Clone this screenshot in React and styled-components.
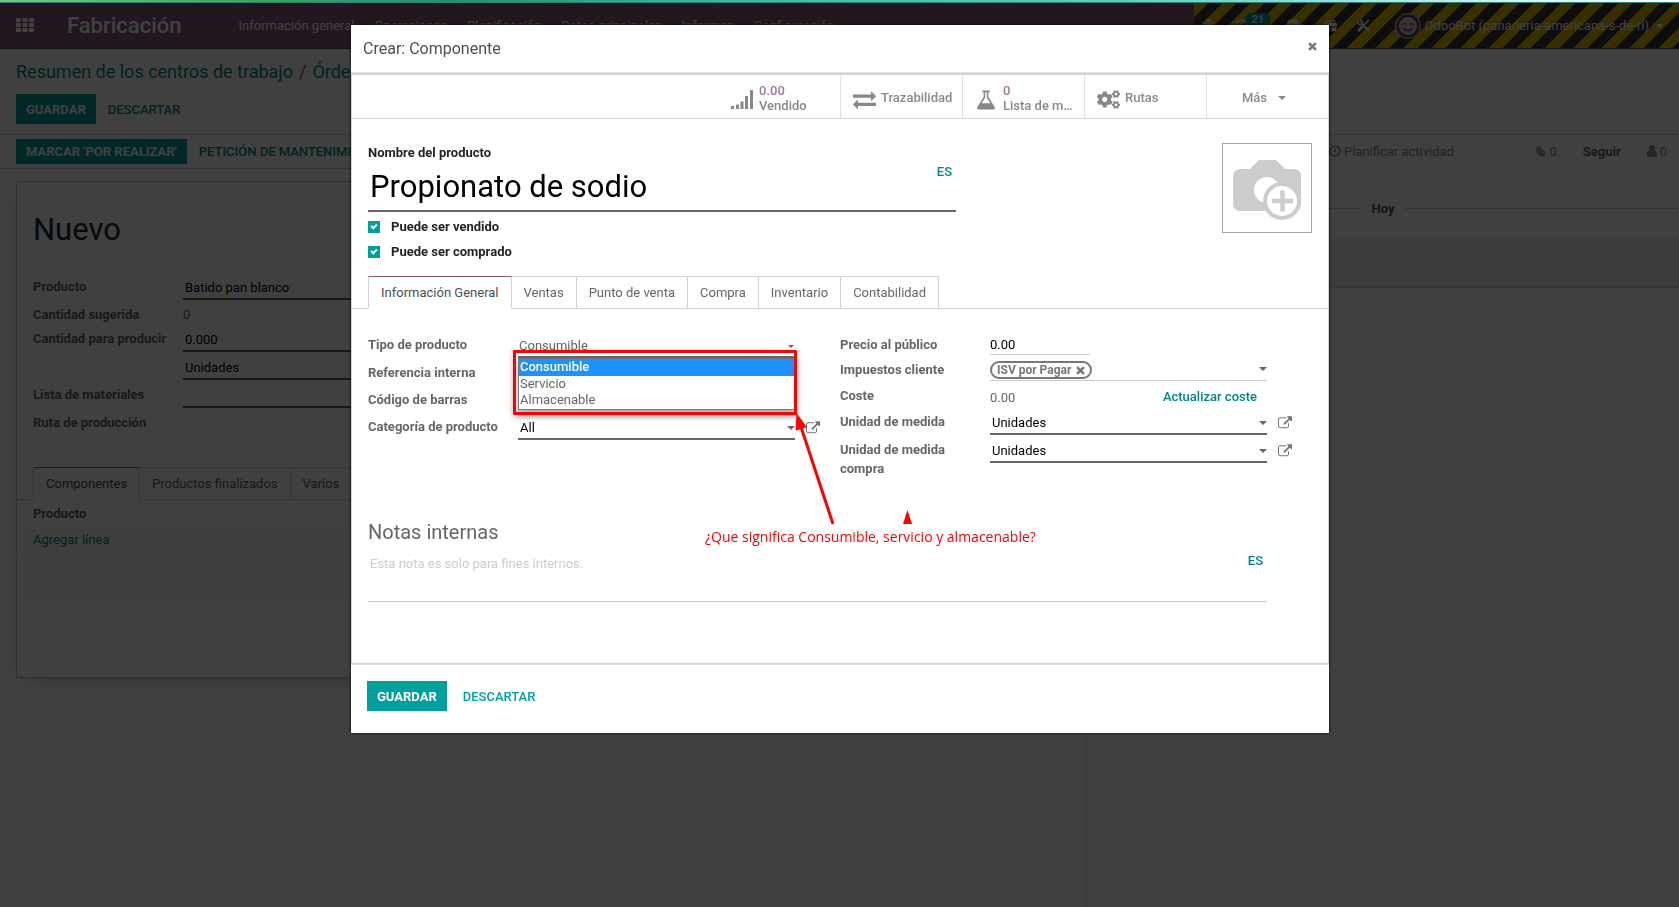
import React from "react";
import styled, { createGlobalStyle, css } from "styled-components";
import { FaCogs, FaBug, FaComments, FaGift } from "react-icons/fa";
import { Paperclip } from "lucide-react";

const Global = createGlobalStyle`
  *, *::before, *::after { box-sizing: border-box; }
  body {
    margin: 0;
    background: #fff;
    color: #666;
    font: 400 13px/19px Roboto, "Liberation Sans", sans-serif;
  }
  button, input, select, textarea { font: inherit; color: inherit; }
  button { cursor: pointer; }
  a { text-decoration: none; }
`;

/* ---------- shared parts ---------- */

const Button = styled.button`
  height: ${(p) => (p.$small ? "25px" : "30px")};
  padding: 0 10px;
  border: 0;
  background: ${(p) => (p.$primary ? "#00a09d" : "transparent")};
  color: ${(p) => (p.$primary ? "#fff" : p.$dark ? "#008784" : "#00a09d")};
  font-weight: ${(p) => (p.$primary ? 700 : 500)};
  text-transform: uppercase;
  white-space: nowrap;
`;

const ButtonBar = styled.div`
  display: flex;
  align-items: center;
  gap: ${(p) => (p.$wide ? "6px" : "2px")};
`;

const Tabs = styled.div`
  display: flex;
  margin: 0 -16px;
  padding-left: 16px;
  border-bottom: 1px solid #ced4da;
`;

const Tab = styled.button`
  height: 33px;
  margin: 0 0 -1px ${(p) => (p.$first ? "0" : "-1px")};
  padding: 0 12px;
  border: 1px solid #ced4da;
  background: #fff;
  color: #666;
  white-space: nowrap;
  ${(p) =>
    p.$active &&
    css`
      position: relative;
      border-top-color: #875a7b;
      border-bottom-color: #fff;
      color: #495057;
    `}
`;

const Row = styled.div`
  display: grid;
  grid-template-columns: 150px minmax(0, 1fr) 45px;
  min-height: ${(p) => p.$h}px;
`;

const Label = styled.label`
  padding: 5px 10px 0 0;
  color: #666;
  font-weight: 700;
`;

const Cell = styled.div`
  position: relative;
  height: ${(p) => p.$h}px;
`;

const field = css`
  display: block;
  width: ${(p) => (p.$narrow ? "100px" : "100%")};
  height: 100%;
  margin: 0;
  padding: 5px 20px 0 ${(p) => (p.$thin ? "0" : "2px")};
  border: 0;
  border-bottom: ${(p) => (p.$thin ? "1px solid #ccc" : "2px solid #666")};
  border-radius: 0;
  outline: 0;
  background: transparent;
  color: ${(p) => (p.$muted ? "#666" : "#000")};
`;

const Input = styled.input`
  ${field}
`;

const Select = styled.select`
  ${field}
  appearance: none;
  padding-left: 1px;
`;

const Plain = styled.span`
  display: block;
  padding-top: ${(p) => (p.$low ? "7px" : "5px")};
`;

const Caret = styled.span`
  width: 0;
  height: 0;
  border: ${(p) => p.$size || 4}px solid transparent;
  border-top-color: currentColor;
  border-bottom-width: 0;
`;

const FieldCaret = styled(Caret)`
  position: absolute;
  right: ${(p) => (p.$inset ? "1px" : "0")};
  bottom: 10px;
`;

const OpenButton = styled.button`
  align-self: start;
  justify-self: start;
  height: 14px;
  margin: 8px 0 0 11px;
  padding: 0;
  border: 0;
  background: none;
  color: #6c757d;
  line-height: 0;
`;

/* ---------- page behind the dialog ---------- */

const Progress = styled.div`
  position: relative;
  z-index: 3;
  height: 3px;
  border-bottom: 1px solid #2c7f7c;
  background: linear-gradient(90deg, #7cc576 0%, #3fa45b 15%, #219464 27%, #3dbf9f 45%, #55ccb0 62%, #7fd8cb 75%, #c8efe6 88%, #fff 100%);
`;

const Page = styled.div`
  display: flex;
  flex-direction: column;
  min-height: 100vh;
`;

const Navbar = styled.header`
  display: flex;
  height: 46px;
  background: #875a7b;
  border-bottom: 1px solid #68465f;
  color: #fff;
`;

const NavLeft = styled.div`
  display: flex;
  flex: 1;
  align-items: center;
  padding-left: 16px;
`;

const Apps = styled.button`
  width: 18px;
  padding: 0;
  border: 0;
  background: none;
  line-height: 0;
`;

const Brand = styled.a`
  margin-left: 33px;
  color: #fff;
  font-size: 22px;
  font-weight: 500;
`;

const Menu = styled.nav`
  display: flex;
  gap: 20px;
  margin-left: 57px;

  a { color: #fff; white-space: nowrap; }
`;

const Systray = styled.div`
  display: flex;
  align-items: center;
  gap: 20px;
  padding: 0 15px 0 8px;
  background: repeating-linear-gradient(135deg, #d9b904, #d9b904 10px, #373435 10px, #373435 20px);
`;

const TrayItem = styled.span`
  position: relative;
  display: flex;
  margin-right: ${(p) => (p.$badge ? "19px" : "0")};
`;

const Badge = styled.span`
  position: absolute;
  left: 10px;
  top: -6px;
  padding: 0 7px;
  border-radius: 7px;
  background: #00a09d;
  font-size: 11px;
  font-weight: 500;
  line-height: 13px;
`;

const User = styled.button`
  display: flex;
  align-items: center;
  gap: 4px;
  margin-left: 5px;
  padding: 0;
  border: 0;
  background: none;
  white-space: nowrap;

  ${Caret} { margin-left: 3px; }
`;

const ControlPanel = styled.div`
  height: 86px;
  padding: 12px 16px 0;
  border-bottom: 1px solid #ced4da;
`;

const Breadcrumb = styled.nav`
  height: 33px;
  font-size: 18px;
  line-height: 22px;
  white-space: nowrap;

  a { color: #008784; }
  span { padding: 0 6px; }
`;

const Columns = styled.div`
  display: grid;
  flex: 1;
  grid-template-columns: 1087fr 592fr;
`;

const FormView = styled.main`
  border-right: 1px solid #dee2e6;
`;

const StatusBar = styled.div`
  height: 34px;
  padding: 4px 16px 0;
  border-bottom: 1px solid #ced4da;
`;

const Sheet = styled.section`
  min-height: 497px;
  margin: 12px 16px;
  padding: 31px 16px 0;
  border: 1px solid #c8c8d3;
  background: #fff;
  box-shadow: 0 5px 20px -15px #000;
`;

const SheetTitle = styled.h1`
  height: 59px;
  margin: 0;
  color: #212529;
  font-size: 31px;
  font-weight: 400;
  line-height: 34px;
`;

const SheetFields = styled.div`
  width: 50%;
  min-height: 195px;
`;

const Lines = styled.table`
  width: calc(100% + 32px);
  margin: 0 -16px;
  border-collapse: collapse;

  th, td { padding: 0 16px; text-align: left; }
  th { height: 27px; }
  td { height: 25px; border-top: 1px solid #eee; border-bottom: 1px solid #f4f4f4; background: #fcfcfc; }
  a { color: #008784; }
  tfoot td { height: 49px; }
`;

const Chatter = styled.aside`
  color: #666;
`;

const ChatterBar = styled.div`
  display: flex;
  align-items: center;
  justify-content: flex-end;
  height: 32px;
  padding-right: 12px;
  color: #868e96;
`;

const ChatterButton = styled.button`
  display: flex;
  align-items: center;
  gap: 3px;
  margin: ${(p) => (p.$lead ? "0 auto 0 242px" : "0")};
  padding: 0;
  border: 0;
  background: none;
  white-space: nowrap;
`;

const Follow = styled(ChatterButton)`
  margin: 0 26px;
  color: #666;
  font-weight: 700;
`;

const ClipIcon = styled(Paperclip)`
  transform: scaleX(-1);
`;

const DateLine = styled.div`
  display: flex;
  align-items: center;
  gap: 10px;
  margin-top: 32px;
  color: #495057;
  font-weight: 700;

  &::before, &::after { content: ""; flex: 1; height: 1px; background: #ced4da; }
`;

const Message = styled.div`
  height: 49px;
  margin-top: 21px;
  border-bottom: 1px solid #ced4da;
  background: #e9ecef;
`;

/* ---------- dialog ---------- */

const Backdrop = styled.div`
  position: fixed;
  inset: 0;
  z-index: 2;
  overflow: auto;
  padding: 25px 0 0 1px;
  background: rgba(0, 0, 0, 0.75);
`;

const Modal = styled.section`
  width: 100%;
  max-width: 978px;
  margin: 0 auto;
  background: #fff;
  box-shadow: 0 0 3px #000;
`;

const ModalHeader = styled.header`
  display: flex;
  align-items: center;
  justify-content: space-between;
  height: 48px;
  padding: 0 12px;
  border-bottom: 1px solid #dee2e6;

  h2 {
    margin: 0;
    color: #495057;
    font-size: 16px;
    font-weight: 400;
  }
`;

const Close = styled.button`
  margin-bottom: 4px;
  padding: 0;
  border: 0;
  background: none;
  color: #777;
  line-height: 0;
`;

const ModalBody = styled.div`
  position: relative;
  border: 1px solid #ced4da;
  border-width: 2px 1px 1px;
`;

const StatBox = styled.div`
  display: flex;
  justify-content: flex-end;
  height: 44px;
  border-bottom: 1px solid #ced4da;
`;

const StatButton = styled.button`
  display: flex;
  align-items: center;
  justify-content: ${(p) => (p.$center ? "center" : "flex-start")};
  gap: ${(p) => (p.$center ? "11px" : "1px")};
  width: 122px;
  padding: ${(p) => (p.$center ? "2px 11px 0 4px" : "2px 6px 0 7px")};
  border: 0;
  border-left: 1px solid ${(p) => (p.$first ? "transparent" : "#dee2e6")};
  background: none;
  color: #888;
  font-weight: 500;
  line-height: 15px;
  text-align: left;
  white-space: nowrap;
`;

const StatIcon = styled.span`
  display: flex;
  justify-content: center;
  flex: 0 0 32px;
  padding-top: 4px;
`;

const StatText = styled.span`
  min-width: 0;
  overflow: hidden;
  text-overflow: ellipsis;

  b { display: block; color: #a2789a; font-weight: 500; }
`;

const ModalSheet = styled.div`
  padding: 24px 16px 61px;
`;

const Head = styled.div`
  display: flex;
  justify-content: space-between;
`;

const TitleBlock = styled.div`
  flex: 0 1 588px;

  > label { display: block; color: #212529; font-weight: 700; }
`;

const NameWrap = styled.div`
  position: relative;
  height: 50px;
`;

const NameInput = styled.input`
  width: 100%;
  height: 100%;
  padding: 0 44px 0 2px;
  border: 0;
  border-bottom: 2px solid #666;
  outline: 0;
  color: #000;
  font-size: 31px;
  line-height: 48px;
`;

const Lang = styled.button`
  position: absolute;
  top: 0;
  right: 4px;
  padding: 0;
  border: 0;
  background: none;
  color: #008784;
  font-weight: 500;
`;

const Checks = styled.div`
  padding: 2px 0 12px;
`;

const Check = styled.label`
  display: flex;
  align-items: center;
  gap: 11px;
  height: 25px;
  color: #212529;
  font-weight: 700;

  input {
    display: grid;
    place-items: center;
    width: 12px;
    height: 12px;
    margin: 0;
    appearance: none;
    background: #00a09d;
  }
  input::after {
    content: "";
    width: 6px;
    height: 4px;
    margin-top: -2px;
    border: solid #fff;
    border-width: 0 0 2px 2px;
    transform: rotate(-45deg);
  }
`;

const Picture = styled.button`
  flex: none;
  width: 90px;
  height: 90px;
  padding: 0;
  border: 1px solid #a8a8a8;
  background: #fff;
  line-height: 0;
`;

const Groups = styled.div`
  display: grid;
  grid-template-columns: 1fr 1fr;
  padding-top: 21px;
`;

const Menulist = styled.ul`
  position: absolute;
  z-index: 1;
  top: 100%;
  left: 0;
  right: 0;
  height: 52px;
  margin: 0;
  padding: 0;
  border: 1px solid #767676;
  background: #fff;
  box-shadow: 0 4px 6px rgba(0, 0, 0, 0.35);
  list-style: none;
`;

const Option = styled.li`
  padding: 0 0 ${(p) => (p.$on ? "1px" : "0")} 1px;
  background: ${(p) => (p.$on ? "#1e90ff" : "transparent")};
  color: ${(p) => (p.$on ? "#fff" : "#666")};
  font-weight: ${(p) => (p.$on ? 500 : 400)};
  line-height: 16px;
`;

const TagField = styled.div`
  display: flex;
  align-items: flex-end;
  height: 100%;
  padding-bottom: 1px;
  border-bottom: 1px solid #ccc;
`;

const Tag = styled.span`
  display: flex;
  align-items: center;
  gap: 5px;
  height: 18px;
  padding: 0 5px;
  border: 2px solid #777;
  border-radius: 9px;
  color: #777;
  font-size: 12px;
  font-weight: 700;
  white-space: nowrap;
`;

const CostCell = styled(Cell)`
  display: flex;
  justify-content: space-between;
  padding-right: 10px;
`;

const CostLink = styled.button`
  padding: 5px 0 0;
  border: 0;
  background: none;
  color: #008784;
  font-weight: 500;
`;

const NotesTitle = styled.h3`
  margin: 42px 0 7px;
  font-size: 20px;
  font-weight: 400;
  line-height: 24px;
`;

const Notes = styled.div`
  position: relative;
  margin-right: 45px;
`;

const NotesInput = styled.textarea`
  display: block;
  width: 100%;
  height: 51px;
  padding: 3px 44px 0 2px;
  border: 0;
  border-bottom: 1px solid #ccc;
  outline: 0;
  resize: none;

  &::placeholder { color: #ccc; }
`;

const ModalFooter = styled.footer`
  height: 69px;
  padding: 16px 16px 0;
  border-top: 1px solid #dee2e6;
`;

const Frame = styled.div`
  position: absolute;
  z-index: 2;
  top: 20px;
  left: -5px;
  right: -2px;
  height: 65px;
  border: 3px solid #f00;
  border-radius: 1px;
  box-shadow: 0 2px 6px rgba(0, 0, 0, 0.3);
  pointer-events: none;
`;

const Pointer = styled.svg`
  position: absolute;
  z-index: 2;
  left: 440px;
  top: 335px;
  pointer-events: none;
`;

const Remark = styled.p`
  position: absolute;
  z-index: 2;
  left: 353px;
  top: 452px;
  margin: 0;
  color: #f00;
  font-family: "Open Sans", "Noto Sans", sans-serif;
  font-size: 14px;
  white-space: nowrap;
`;

/* ---------- icons ---------- */

const Glyph = ({ d, box = "0 0 1792 1792", w, h = w }) => (
  <svg width={w} height={h} viewBox={box} fill="currentColor" aria-hidden="true">
    <path d={d} />
  </svg>
);

const EXCHANGE =
  "M1792 1184v192q0 13-9.5 22.5t-22.5 9.5h-1376v192q0 13-9.5 22.5t-22.5 9.5q-12 0-24-10l-319-320q-9-9-9-22 0-14 9-23l320-320q9-9 23-9 13 0 22.5 9.5t9.5 22.5v192h1376q13 0 22.5 9.5t9.5 22.5zm0-544q0 14-9 23l-320 320q-9 9-23 9-13 0-22.5-9.5t-9.5-22.5v-192h-1376q-13 0-22.5-9.5t-9.5-22.5v-192q0-13 9.5-22.5t22.5-9.5h1376v-192q0-14 9-23t23-9q12 0 24 10l319 319q9 9 9 23z";
const FLASK =
  "M1591 1448q56 89 21.5 152.5t-140.5 63.5h-1152q-106 0-140.5-63.5t21.5-152.5l503-793v-399h-64q-26 0-45-19t-19-45 19-45 45-19h512q26 0 45 19t19 45-19 45-45 19h-64v399zm-779-725l-272 429h712l-272-429-20-31v-436h-128v436z";
const EXTERNAL =
  "M1408 928v320q0 119-84.500 203.500t-203.500 84.500h-832q-119 0-203.500-84.500t-84.500-203.500v-832q0-119 84.500-203.500t203.500-84.500h704q14 0 23 9t9 23v64q0 14-9 23t-23 9h-704q-66 0-113 47t-47 113v832q0 66 47 113t113 47h832q66 0 113-47t47-113v-320q0-14 9-23t23-9h64q14 0 23 9t9 23zm384-864v512q0 26-19 45t-45 19-45-19l-176-176-652 652q-10 10-23 10t-23-10l-114-114q-10-10-10-23t10-23l652-652-176-176q-19-19-19-45t19-45 45-19h512q26 0 45 19t19 45z";

const SignalIcon = () => (
  <svg width="22" height="19" viewBox="0 0 22 19" fill="currentColor" aria-hidden="true">
    <path d="M0 16h3v3H0zM5 14.500h3V19H5zM9.500 11.500h3V19h-3zM14 6h3v13h-3zM19 0h3v19h-3z" />
  </svg>
);

const ClockIcon = ({ size = 12 }) => (
  <svg width={size} height={size} viewBox="0 0 12 12" fill="none" stroke="currentColor" strokeWidth="1.500" aria-hidden="true">
    <circle cx="6" cy="6" r="5" />
    <path d="M6.300 3v3.500H4" strokeWidth="1.200" />
  </svg>
);

const PersonIcon = () => (
  <svg width="10" height="12" viewBox="0 0 10 12" fill="currentColor" aria-hidden="true">
    <circle cx="5" cy="3" r="3" />
    <path d="M2.200 5.300C.7 5.700 0 7.500 0 9.800 0 11.200.8 12 2 12h6c1.200 0 2-.8 2-2.200 0-2.300-.7-4.100-2.200-4.500a4 4 0 0 1-5.600 0z" />
  </svg>
);

const CrossIcon = ({ size = 9 }) => (
  <svg width={size} height={size} viewBox="0 0 10 10" stroke="currentColor" strokeWidth="2.800" aria-hidden="true">
    <path d="M1.200 1.200l7.600 7.600M8.800 1.200L1.200 8.800" />
  </svg>
);

const GridIcon = () => (
  <svg width="18" height="15" viewBox="0 0 18 15" fill="currentColor" aria-hidden="true">
    {[0, 5, 10].map((y) =>
      [0, 6.500, 13].map((x) => <rect key={x + "-" + y} x={x} y={y} width="5" height="4" rx=".6" />)
    )}
  </svg>
);

const ToolsIcon = () => (
  <svg width="13" height="13" viewBox="0 0 13 13" fill="none" stroke="currentColor" aria-hidden="true">
    <path d="M4 4l8 8" strokeWidth="2.200" />
    <path d="M1 2.500v1.700L2.500 5.500l2-.3.700-2L4 1.500 2.800 1" strokeWidth="1.600" />
    <path d="M12 1L7 6" strokeWidth="1.400" />
    <path d="M5.500 7.500L1.200 12" strokeWidth="2.800" />
  </svg>
);

const Avatar = () => (
  <svg width="26" height="26" viewBox="0 0 26 26" aria-hidden="true">
    <circle cx="13" cy="13" r="13" fill="#b9a5b5" />
    <circle cx="13" cy="13" r="11.500" fill="#5d3c55" />
    <circle cx="13" cy="13" r="9" fill="#d0d0d0" />
    <g fill="none" stroke="#5d3c55" strokeWidth="1.200" strokeLinecap="round">
      <path d="M7.500 11.500q1.700-2 3.400 0M15.100 11.500q1.700-2 3.400 0M8.500 15.500q4.500 4 9 0" />
    </g>
  </svg>
);

const CameraIcon = () => (
  <svg width="88" height="88" viewBox="0 0 88 88" aria-hidden="true">
    <path
      fill="#ccc"
      d="M18 25h9l8-8q1-1 2-1h15q1 0 2 1l8 8h9q7 0 7 8v26q0 8-7 8H18q-8 0-8-8V33q0-8 8-8z"
    />
    <circle cx="44" cy="46" r="13" fill="#fff" />
    <circle cx="59" cy="57" r="19" fill="#ccc" />
    <circle cx="59" cy="57" r="15" fill="#fff" />
    <path d="M49 57h21M59.500 46.500v21" stroke="#ccc" strokeWidth="4.500" />
  </svg>
);

/* ---------- composition ---------- */

const External = ({ label }) => (
  <OpenButton type="button" aria-label={label}>
    <Glyph d={EXTERNAL} box="0 0 1792 1600" w={14} h={13} />
  </OpenButton>
);

const OpenField = ({ id, label, value, h = 28, lookup = true }) => (
  <Row $h={h}>
    <Label htmlFor={id}>{label}</Label>
    <Cell $h={28}>
      <Input id={id} defaultValue={value} />
      {lookup && <FieldCaret />}
    </Cell>
    {lookup && <External label={`Abrir ${label}`} />}
  </Row>
);

const TabStrip = ({ items }) => (
  <Tabs role="tablist">
    {items.map((t, i) => (
      <Tab key={t} type="button" role="tab" aria-selected={i === 0} $first={i === 0} $active={i === 0}>
        {t}
      </Tab>
    ))}
  </Tabs>
);

const MENU = ["Información general", "Operaciones", "Planificación", "Datos principales", "Informes", "Configuración"];

function Background() {
  return (
    <Page>
      <Progress />
      <Navbar>
        <NavLeft>
          <Apps type="button" aria-label="Aplicaciones"><GridIcon /></Apps>
          <Brand href="#">Fabricación</Brand>
          <Menu>{MENU.map((m) => <a key={m} href="#">{m}</a>)}</Menu>
        </NavLeft>
        <Systray>
          <TrayItem><FaBug size={13} /></TrayItem>
          <TrayItem $badge>
            <ClockIcon size={13} />
            <Badge>21</Badge>
          </TrayItem>
          <TrayItem><FaComments size={17} /></TrayItem>
          <TrayItem><FaGift size={13} /></TrayItem>
          <TrayItem><ToolsIcon /></TrayItem>
          <User type="button">
            <Avatar />
            OdooBot (panaderia-americana-s-de-rl)
            <Caret />
          </User>
        </Systray>
      </Navbar>
      <ControlPanel>
        <Breadcrumb>
          <a href="#">Resumen de los centros de trabajo</a>
          <span>/</span>
          <a href="#">Órdenes</a>
        </Breadcrumb>
        <ButtonBar>
          <Button type="button" $primary>Guardar</Button>
          <Button type="button" $dark>Descartar</Button>
        </ButtonBar>
      </ControlPanel>
      <Columns>
        <FormView>
          <StatusBar>
            <ButtonBar>
              <Button type="button" $primary $small>Marcar 'por realizar'</Button>
              <Button type="button" $dark $small>Petición de mantenimiento</Button>
            </ButtonBar>
          </StatusBar>
          <Sheet>
            <SheetTitle>Nuevo</SheetTitle>
            <SheetFields>
              <OpenField id="mo-product" label="Producto" value="Batido pan blanco" lookup={false} />
              <Row $h={24}>
                <Label as="span">Cantidad sugerida</Label>
                <Plain>0</Plain>
              </Row>
              <OpenField id="mo-qty" label="Cantidad para producir" value="0.000" lookup={false} />
              <OpenField id="mo-uom" label="" value="Unidades" lookup={false} />
              <OpenField id="mo-bom" label="Lista de materiales" value="" lookup={false} />
              <Row $h={28}>
                <Label as="span">Ruta de producción</Label>
              </Row>
            </SheetFields>
            <TabStrip items={["Componentes", "Productos finalizados", "Varios"]} />
            <Lines>
              <thead><tr><th>Producto</th></tr></thead>
              <tbody><tr><td><a href="#">Agregar línea</a></td></tr></tbody>
              <tfoot><tr><td /></tr></tfoot>
            </Lines>
          </Sheet>
        </FormView>
        <Chatter>
          <ChatterBar>
            <ChatterButton type="button" $lead><ClockIcon /> Planificar actividad</ChatterButton>
            <ChatterButton type="button"><ClipIcon size={11} strokeWidth={3} /> 0</ChatterButton>
            <Follow type="button">Seguir</Follow>
            <ChatterButton type="button"><PersonIcon /> 0</ChatterButton>
          </ChatterBar>
          <DateLine>Hoy</DateLine>
          <Message />
        </Chatter>
      </Columns>
    </Page>
  );
}

function ProductDialog() {
  return (
    <Modal role="dialog" aria-label="Crear: Componente">
      <ModalHeader>
        <h2>Crear: Componente</h2>
        <Close type="button" aria-label="Cerrar"><CrossIcon /></Close>
      </ModalHeader>
      <ModalBody>
        <StatBox>
          <StatButton type="button" $first>
            <StatIcon><SignalIcon /></StatIcon>
            <StatText><b>0.00</b>Vendido</StatText>
          </StatButton>
          <StatButton type="button">
            <StatIcon><Glyph d={EXCHANGE} w={23} /></StatIcon>
            <StatText>Trazabilidad</StatText>
          </StatButton>
          <StatButton type="button">
            <StatIcon><Glyph d={FLASK} w={22} /></StatIcon>
            <StatText><b>0</b>Lista de materiales</StatText>
          </StatButton>
          <StatButton type="button">
            <StatIcon><FaCogs size={23} /></StatIcon>
            <StatText>Rutas</StatText>
          </StatButton>
          <StatButton type="button" $center>
            Más <Caret />
          </StatButton>
        </StatBox>
        <ModalSheet>
          <Head>
            <TitleBlock>
              <label htmlFor="name">Nombre del producto</label>
              <NameWrap>
                <NameInput id="name" defaultValue="Propionato de sodio" />
                <Lang type="button">ES</Lang>
              </NameWrap>
              <Checks>
                <Check><input type="checkbox" defaultChecked />Puede ser vendido</Check>
                <Check><input type="checkbox" defaultChecked />Puede ser comprado</Check>
              </Checks>
            </TitleBlock>
            <Picture type="button" aria-label="Imagen"><CameraIcon /></Picture>
          </Head>
          <TabStrip
            items={["Información General", "Ventas", "Punto de venta", "Compra", "Inventario", "Contabilidad"]}
          />
          <Groups>
            <div>
              <Row $h={28}>
                <Label htmlFor="type">Tipo de producto</Label>
                <Cell $h={28}>
                  <Select id="type" defaultValue="Consumible" $muted>
                    <option>Consumible</option>
                    <option>Servicio</option>
                    <option>Almacenable</option>
                  </Select>
                  <FieldCaret $size={3} $inset />
                  <Menulist>
                    <Option $on>Consumible</Option>
                    <Option>Servicio</Option>
                    <Option>Almacenable</Option>
                  </Menulist>
                  <Frame />
                </Cell>
              </Row>
              <Row $h={27}><Label as="span">Referencia interna</Label></Row>
              <Row $h={27}><Label as="span">Código de barras</Label></Row>
              <OpenField id="category" label="Categoría de producto" value="All" />
            </div>
            <div>
              <Row $h={25}>
                <Label htmlFor="price">Precio al público</Label>
                <Cell $h={25}><Input id="price" defaultValue="0.00" $thin $narrow /></Cell>
              </Row>
              <Row $h={26}>
                <Label as="span">Impuestos cliente</Label>
                <Cell $h={26}>
                  <TagField>
                    <Tag>ISV por Pagar <CrossIcon /></Tag>
                  </TagField>
                  <FieldCaret />
                </Cell>
              </Row>
              <Row $h={26}>
                <Label as="span">Coste</Label>
                <CostCell $h={26}>
                  <Plain $low>0.00</Plain>
                  <CostLink type="button">Actualizar coste</CostLink>
                </CostCell>
              </Row>
              <OpenField id="uom" label="Unidad de medida" value="Unidades" />
              <OpenField id="uom-po" label="Unidad de medida compra" value="Unidades" h={43} />
            </div>
          </Groups>
          <NotesTitle>Notas internas</NotesTitle>
          <Notes>
            <NotesInput aria-label="Notas internas" placeholder="Esta nota es solo para fines internos." />
            <Lang type="button">ES</Lang>
          </Notes>
        </ModalSheet>
        <Pointer width="130" height="120" viewBox="0 0 130 120" aria-hidden="true">
          <path d="M9 17L41 114" stroke="#f00" strokeWidth="3" />
          <path d="M5 4L14 17L4 20z" fill="#f00" stroke="#f00" />
          <path d="M115.500 100L120 114H111z" fill="#f00" />
        </Pointer>
        <Remark>¿Que significa Consumible, servicio y almacenable?</Remark>
      </ModalBody>
      <ModalFooter>
        <ButtonBar $wide>
          <Button type="button" $primary>Guardar</Button>
          <Button type="button">Descartar</Button>
        </ButtonBar>
      </ModalFooter>
    </Modal>
  );
}

export default function App() {
  return (
    <>
      <Global />
      <Background />
      <Backdrop>
        <ProductDialog />
      </Backdrop>
    </>
  );
}
